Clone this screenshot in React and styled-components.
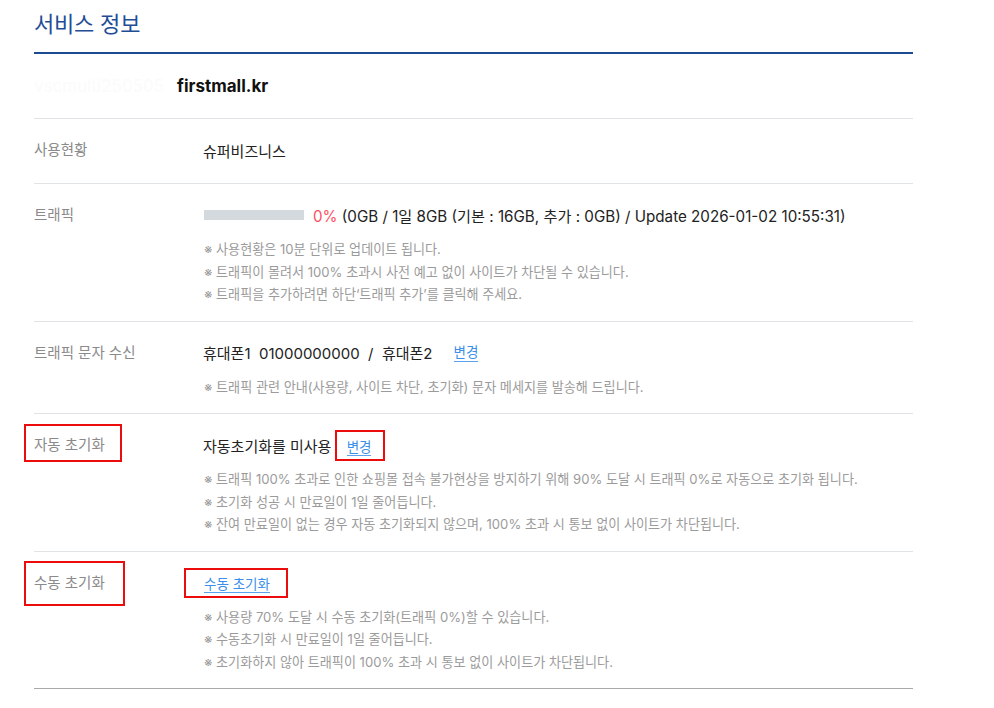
import React from "react";
import styled, { createGlobalStyle } from "styled-components";

const Global = createGlobalStyle`
  html, body { margin: 0; padding: 0; background: #fff; }
  body {
    font-family: Inter, "Noto Sans CJK KR", "Noto Sans", sans-serif;
    color: #222;
  }
`;

const Page = styled.div`
  width: 879px;
  padding-left: 34px;
`;

const Title = styled.h2`
  margin: 0;
  padding: 9px 0 13px;
  font-size: 22px;
  line-height: 30px;
  font-weight: 400;
  color: #1f4d96;
  border-bottom: 2px solid #1c4b94;
  letter-spacing: -0.2px;
`;

const Row = styled.div`
  display: grid;
  grid-template-columns: ${(p) => (p.$head ? "1fr" : "169px 1fr")};
  padding: ${(p) => (p.$head ? "22px 0 22px" : p.$plain ? "21px 0 23px" : "21px 0 15px")};
  border-bottom: 1px solid ${(p) => (p.$last ? "#a9a9a9" : "#dfe3e6")};
`;

const Label = styled.div`
  font-size: 14.5px;
  line-height: 20px;
  color: #8a8a8a;
`;

/* red outline used to highlight a field */
const Marked = styled.span`
  display: ${(p) => (p.$block ? "block" : "inline-block")};
  width: fit-content;
  border: 2px solid #ec0c0c;
  margin: ${(p) => p.$m};
  padding: ${(p) => p.$p};
`;

const Body = styled.div`
  display: flex;
  flex-direction: column;
`;

const Line = styled.div`
  display: flex;
  align-items: center;
  height: 20px;
  font-size: 15px;
  color: #222;
  white-space: pre;
`;

const HeadLine = styled.div`
  display: flex;
  align-items: center;
  gap: 9px;
  height: 20px;
  font-size: 17px;
`;

const Ghost = styled.span`
  color: #fbfbfb;
  width: 134px;
  overflow: hidden;
`;

const Domain = styled.span`
  font-weight: 700;
  color: #111;
`;

const Bar = styled.div`
  width: 100px;
  height: 10px;
  margin: 0 9px 0 1px;
  background: #d3d9dc;
`;

const Usage = styled.span`
  font-size: 15.2px;
  color: #222;
`;

const Percent = styled.span`
  color: #ff4f5f;
`;

const LinkText = styled.span`
  color: #3b8fe9;
  font-size: 13.5px;
  line-height: 18px;
  border-bottom: 1px solid #5aa2f0;
`;

const Notes = styled.ul`
  list-style: none;
  margin: 13px 0 0;
  padding: 0 0 0 1px;
`;

const Note = styled.li`
  font-size: 13.1px;
  line-height: 22.5px;
  color: #9b9b9b;
  white-space: nowrap;
`;

const trafficNotes = [
  "※ 사용현황은 10분 단위로 업데이트 됩니다.",
  "※ 트래픽이 몰려서 100% 초과시 사전 예고 없이 사이트가 차단될 수 있습니다.",
  "※ 트래픽을 추가하려면 하단‘트래픽 추가’를 클릭해 주세요.",
];

const autoNotes = [
  "※ 트래픽 100% 초과로 인한 쇼핑몰 접속 불가현상을 방지하기 위해 90% 도달 시 트래픽 0%로 자동으로 초기화 됩니다.",
  "※ 초기화 성공 시 만료일이 1일 줄어듭니다.",
  "※ 잔여 만료일이 없는 경우 자동 초기화되지 않으며, 100% 초과 시 통보 없이 사이트가 차단됩니다.",
];

const manualNotes = [
  "※ 사용량 70% 도달 시 수동 초기화(트래픽 0%)할 수 있습니다.",
  "※ 수동초기화 시 만료일이 1일 줄어듭니다.",
  "※ 초기화하지 않아 트래픽이 100% 초과 시 통보 없이 사이트가 차단됩니다.",
];

const NoteList = ({ items }) => (
  <Notes>
    {items.map((t) => (
      <Note key={t}>{t}</Note>
    ))}
  </Notes>
);

export default function App() {
  return (
    <>
      <Global />
      <Page>
        <Title>서비스 정보</Title>

        <Row $head>
          <HeadLine>
            <Ghost>vscmulti250505</Ghost>
            <Domain>firstmall.kr</Domain>
          </HeadLine>
        </Row>

        <Row $plain>
          <Label>사용현황</Label>
          <Body>
            <Line>슈퍼비즈니스</Line>
          </Body>
        </Row>

        <Row>
          <Label>트래픽</Label>
          <Body>
            <Line>
              <Bar />
              <Usage>
                <Percent>0%</Percent> (0GB / 1일 8GB (기본 : 16GB, 추가 : 0GB) / Update 2026-01-02 10:55:31)
              </Usage>
            </Line>
            <NoteList items={trafficNotes} />
          </Body>
        </Row>

        <Row>
          <Label>트래픽 문자 수신</Label>
          <Body>
            <Line>
              {"휴대폰1  01000000000  /  휴대폰2     "}
              <LinkText>변경</LinkText>
            </Line>
            <NoteList items={["※ 트래픽 관련 안내(사용량, 사이트 차단, 초기화) 문자 메세지를 발송해 드립니다."]} />
          </Body>
        </Row>

        <Row>
          <Label>
            <Marked $block $m="-11px 0 -7px -10px" $p="9px 15px 5px 8px">자동 초기화</Marked>
          </Label>
          <Body>
            <Line>
              {"자동초기화를 미사용 "}
              <Marked $m="0 0 0 -1px" $p="5px 12px 3px 10px">
                <LinkText>변경</LinkText>
              </Marked>
            </Line>
            <NoteList items={autoNotes} />
          </Body>
        </Row>

        <Row $last>
          <Label>
            <Marked $block $m="-12px 0 -13px -10px" $p="10px 18px 11px 8px">수동 초기화</Marked>
          </Label>
          <Body>
            <Line>
              <Marked $m="0 0 0 -19px" $p="4px 16px 3px 18px">
                <LinkText>수동 초기화</LinkText>
              </Marked>
            </Line>
            <NoteList items={manualNotes} />
          </Body>
        </Row>
      </Page>
    </>
  );
}
